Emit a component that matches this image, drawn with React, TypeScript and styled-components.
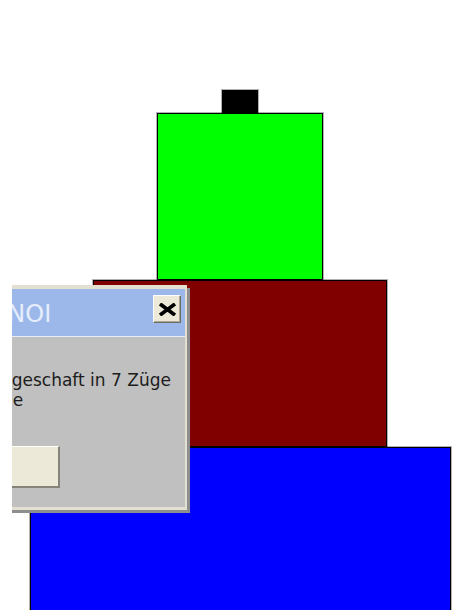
import styled, {createGlobalStyle} from "styled-components";

const GlobalStyle = createGlobalStyle`
  html, body {
    margin: 0;
    padding: 0;
    height: 610px;
    overflow: hidden;
    background: #ffffff;
  }
  body {
    font-family: "DejaVu Sans", "Noto Sans", sans-serif;
  }
`;

const Stage = styled.div`
  position: relative;
  width: 480px;
  height: 610px;
  display: flex;
  flex-direction: column;
  align-items: center;
  padding-top: 90px;
  box-sizing: border-box;
  overflow: hidden;
`;

const Disc = styled.div<{$w: number, $h: number, $color: string}>`
  flex: none;
  width: ${(p) => p.$w}px;
  height: ${(p) => p.$h}px;
  background: ${(p) => p.$color};
  border: 1px solid #000;
  box-shadow: 0 0 0 1px rgba(0, 0, 0, 0.3);
  box-sizing: border-box;
`;

// the message box sits half off screen, only its right part shows
const DialogClip = styled.div`
  position: absolute;
  left: 12px;
  top: 280px;
  width: 190px;
  height: 240px;
  overflow: hidden;
`;

const Window = styled.div`
  position: absolute;
  left: -200px;
  top: 5px;
  width: 375px;
  border-style: solid;
  border-color: #e3e0d2;
  border-width: 4px 2px 3px 2px;
  box-shadow: 3px 3px 0 #8e8e8e;
  box-sizing: border-box;
  display: flex;
  flex-direction: column;
`;

const TitleBar = styled.div`
  height: 48px;
  display: flex;
  align-items: flex-start;
  padding: 0 4px 0 6px;
  background: #9cb8ea;
  border-bottom: 1px solid #e6ecf8;
  box-sizing: border-box;
`;

const TitleText = styled.div`
  margin-top: 13px;
  font-size: 24px;
  line-height: 24px;
  color: #e6eefc;
  white-space: nowrap;
`;

const CloseButton = styled.button`
  margin-left: auto;
  margin-top: 6px;
  width: 28px;
  height: 28px;
  padding: 0;
  display: grid;
  place-items: center;
  background: #ece9d8;
  border: 1px solid;
  border-color: #ffffff #6f6d62 #6f6d62 #ffffff;
  box-shadow: inset -1px -1px 0 #aca899;
  box-sizing: border-box;
`;

const Body = styled.div`
  height: 170px;
  padding: 33px 0 19px;
  background: #c0c0c0;
  box-sizing: border-box;
  display: flex;
  flex-direction: column;
`;

const Message = styled.div`
  padding-left: 83px;
  font-size: 17px;
  line-height: 20px;
  color: #1c1c1c;
  white-space: nowrap;
`;

const ButtonRow = styled.div`
  margin-top: 36px;
  padding-left: 116px;
  display: flex;
`;

const OkButton = styled.button`
  width: 130px;
  height: 42px;
  background: #ece9d8;
  border-style: solid;
  border-width: 1px 2px 2px 1px;
  border-color: #ffffff #85837a #85837a #ffffff;
  font-family: "DejaVu Sans", sans-serif;
  font-size: 17px;
  color: #1c1c1c;
  box-sizing: border-box;
`;

const discs = [
  {w: 36, h: 23, color: "#000000"},
  {w: 166, h: 167, color: "#00ff00"},
  {w: 294, h: 167, color: "#800000"},
  {w: 421, h: 180, color: "#0000ff"},
];

export default function App() {
  return (
    <>
      <GlobalStyle/>
      <Stage>
        {discs.map((d, i) => (
          <Disc key={i} $w={d.w} $h={d.h} $color={d.color}/>
        ))}
        <DialogClip>
          <Window>
            <TitleBar>
              <TitleText>TÜRME VON HANOI</TitleText>
              <CloseButton aria-label="Schließen">
                <svg width="17" height="13" viewBox="0 0 17 13">
                  <path d="M2.5 2 L14.5 11 M14.5 2 L2.5 11" stroke="#000" strokeWidth="3.6" strokeLinecap="square"/>
                </svg>
              </CloseButton>
            </TitleBar>
            <Body>
              <Message>
                <div>Sie haben es geschaft in 7 Züge</div>
                <div>Minimale Züge</div>
              </Message>
              <ButtonRow>
                <OkButton>OK</OkButton>
              </ButtonRow>
            </Body>
          </Window>
        </DialogClip>
      </Stage>
    </>
  );
}
